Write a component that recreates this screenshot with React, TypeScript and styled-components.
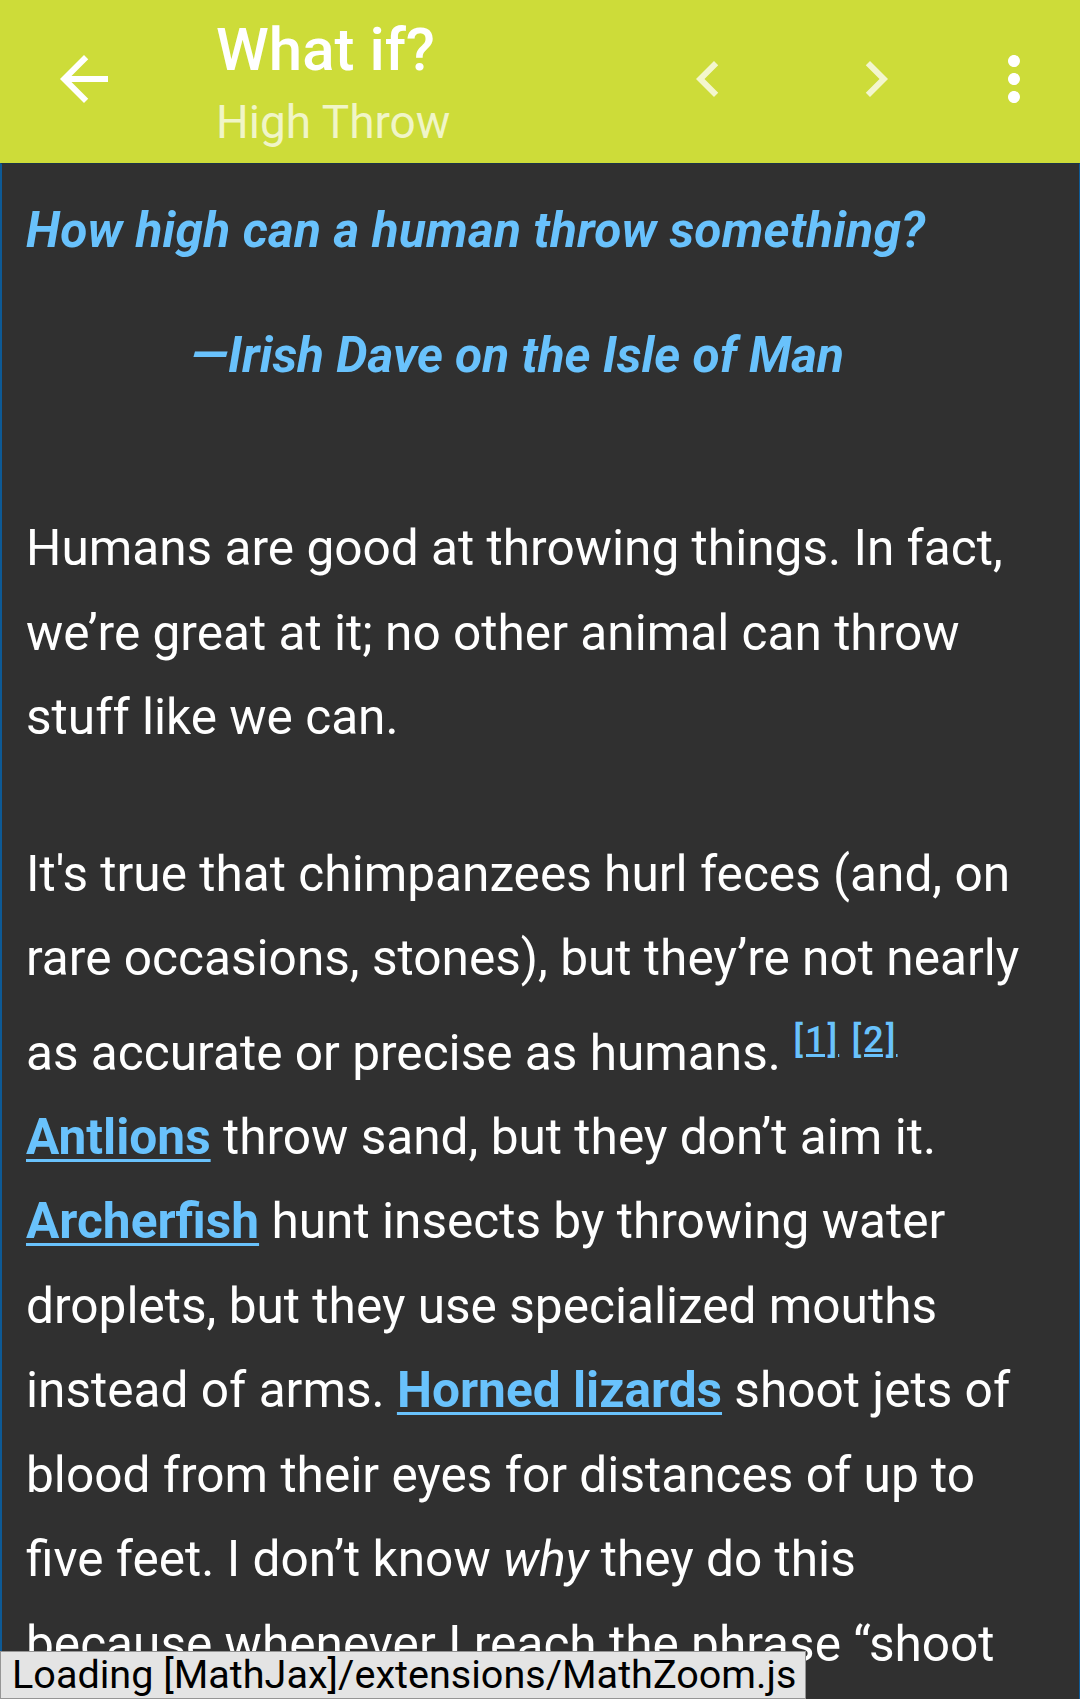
import React from 'react'
import styled, { createGlobalStyle } from 'styled-components'

const GlobalStyle = createGlobalStyle`
  html, body {
    margin: 0;
    padding: 0;
    background: #303030;
  }
  body {
    font-family: Roboto, "Noto Sans", "Liberation Sans", sans-serif;
  }
`

const Screen = styled.div`
  display: flex;
  flex-direction: column;
  width: 1080px;
  height: 1699px;
  overflow: hidden;
  background: #303030;
`

const Toolbar = styled.header`
  display: flex;
  align-items: center;
  flex-shrink: 0;
  height: 163px;
  padding-bottom: 5px;
  box-sizing: border-box;
  background: #cddc39;
`

const NavButton = styled.div`
  display: flex;
  align-items: center;
  justify-content: center;
  width: 168px;
  height: 72px;
`

const TitleBlock = styled.div`
  align-self: flex-start;
  flex: 1;
  margin-left: 48px;
  padding-top: 14px;
`

const Title = styled.div`
  font-size: 60px;
  line-height: 72px;
  font-weight: 500;
  color: #ffffff;
`

const Subtitle = styled.div`
  margin-top: 6px;
  font-size: 46px;
  line-height: 60px;
  color: rgba(255, 255, 255, 0.72);
`

const Actions = styled.div`
  display: flex;
  align-items: center;
  padding-right: 30px;
`

const ActionButton = styled.div<{ $ml?: number }>`
  display: flex;
  align-items: center;
  justify-content: center;
  width: 72px;
  height: 72px;
  margin-left: ${({ $ml }) => $ml || 0}px;
`

const Article = styled.main`
  flex: 1;
  border-top: 1px solid #1c3446;
  border-left: 2px solid #0d5a96;
  border-right: 1px solid #0d5a96;
  padding: 0 52px 0 24px;
  color: #ffffff;
  font-size: 49.6px;
  line-height: 84.5px;
`

const Question = styled.p`
  margin: 24px 0 0;
  font-weight: 700;
  font-style: italic;
  letter-spacing: 0.2px;
  color: #69c2fc;
`

const Attribute = styled.p`
  margin: 40px 0 0;
  padding-right: 18px;
  text-align: center;
  font-weight: 700;
  font-style: italic;
  color: #69c2fc;
`

const Para = styled.p<{ $first?: boolean }>`
  margin: ${({ $first }) => ($first ? 109 : 72)}px 0 0;
`

const Link = styled.a`
  color: #69c2fc;
  font-weight: 700;
  text-decoration: underline;
  text-decoration-thickness: 3px;
  text-underline-offset: 5px;
`

const Ref = styled.sup`
  font-size: 36px;
  line-height: 79px;
  letter-spacing: 2px;
  color: #69c2fc;
  font-weight: 500;
  text-decoration: underline;
  text-decoration-thickness: 3px;
`

const Loading = styled.div`
  position: fixed;
  left: 0;
  bottom: 0;
  padding: 1px 9px 0 11px;
  height: 48px;
  box-sizing: border-box;
  background: #e4e4e4;
  border: 1px solid #959595;
  color: #000000;
  font-size: 39.6px;
  line-height: 44px;
  white-space: nowrap;
`

const Icon: React.FC<{ d: string; color?: string }> = ({ d, color = '#ffffff' }) => (
  <svg width="72" height="72" viewBox="0 0 24 24">
    <path d={d} fill={color} />
  </svg>
)

const App: React.FC = () => {
  return (
    <Screen>
      <GlobalStyle />
      <Toolbar>
        <NavButton>
          <Icon d="M20 11H7.83l5.59-5.59L12 4l-8 8 8 8 1.41-1.41L7.83 13H20v-2z" />
        </NavButton>
        <TitleBlock>
          <Title>What if?</Title>
          <Subtitle>High Throw</Subtitle>
        </TitleBlock>
        <Actions>
          <ActionButton>
            <Icon d="M15.41 7.41L14 6l-6 6 6 6 1.41-1.41L10.83 12z" color="rgba(255,255,255,0.75)" />
          </ActionButton>
          <ActionButton $ml={96}>
            <Icon d="M10 6L8.59 7.41 13.17 12l-4.58 4.59L10 18l6-6z" color="rgba(255,255,255,0.75)" />
          </ActionButton>
          <ActionButton $ml={66}>
            <Icon d="M12 8c1.1 0 2-.9 2-2s-.9-2-2-2-2 .9-2 2 .9 2 2 2zm0 2c-1.1 0-2 .9-2 2s.9 2 2 2 2-.9 2-2-.9-2-2-2zm0 6c-1.1 0-2 .9-2 2s.9 2 2 2 2-.9 2-2-.9-2-2-2z" />
          </ActionButton>
        </Actions>
      </Toolbar>
      <Article>
        <Question>How high can a human throw something?</Question>
        <Attribute>—Irish Dave on the Isle of Man</Attribute>
        <Para $first>
          Humans are good at throwing things. In fact, we’re great at it; no other animal can throw
          stuff like we can.
        </Para>
        <Para>
          It's true that chimpanzees hurl feces (and, on rare occasions, stones), but they’re not
          nearly as accurate or precise as humans. <Ref>[1]</Ref> <Ref>[2]</Ref>{' '}
          <Link>Antlions</Link> throw sand, but they don’t aim it. <Link>Archerfish</Link> hunt
          insects by throwing water droplets, but they use specialized mouths instead of arms.{' '}
          <Link>Horned lizards</Link> shoot jets of blood from their eyes for distances of up to five
          feet. I don’t know <em>why</em> they do this because whenever I reach the phrase “shoot
          blood from their eyes” in an article I stop reading and lie still for a while.
        </Para>
      </Article>
      <Loading>Loading [MathJax]/extensions/MathZoom.js</Loading>
    </Screen>
  )
}

export default App
